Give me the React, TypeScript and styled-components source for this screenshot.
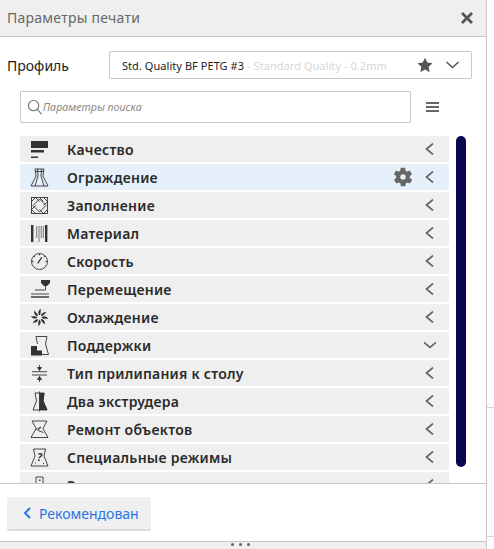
import React from "react";
import styled, { createGlobalStyle } from "styled-components";

const GlobalStyle = createGlobalStyle`
  html, body {
    margin: 0;
    padding: 0;
    background: #fff;
    font-family: "Noto Sans", "Open Sans", sans-serif;
  }
`;

const Page = styled.div`
  width: 494px;
  height: 549px;
  overflow: hidden;
  display: flex;
  background: #fff;
`;

const Panel = styled.div`
  width: 486px;
  height: 549px;
  flex: none;
  display: flex;
  flex-direction: column;
  border-right: 1px solid #c8c8c8;
`;

const Gutter = styled.div`
  flex: 1;
  padding-top: 407px;
`;

const GutterLine = styled.div`
  border-top: 1px solid #d4d4d4;
  height: 128px;
  border-bottom: 1px solid #d4d4d4;
  background: #fdfdfd;
`;

const Header = styled.div`
  height: 36px;
  flex: none;
  box-sizing: content-box;
  display: flex;
  align-items: center;
  justify-content: space-between;
  padding: 0 13px 0 7px;
  background: #efefef;
  border-bottom: 1px solid #c8c8c8;
  font-size: 14px;
  line-height: 34px;
  color: #666;
  letter-spacing: 0.25px;
`;

const ProfileRow = styled.div`
  display: flex;
  align-items: center;
  justify-content: space-between;
  padding: 14px 14px 0 7px;
`;

const ProfileLabel = styled.div`
  font-size: 14px;
  color: #222;
`;

const ProfileSelect = styled.div`
  width: 363px;
  height: 28px;
  box-sizing: border-box;
  display: flex;
  align-items: center;
  gap: 13px;
  padding: 0 12px;
  border: 1px solid #c8c8c8;
  border-radius: 2px;
  font-size: 11px;
  letter-spacing: 0.05px;
  white-space: nowrap;
`;

const ProfileText = styled.div`
  flex: 1;
`;

const ProfileName = styled.span`
  color: #222;
`;

const ProfileHint = styled.span`
  color: #d6d6d6;
  margin-left: 3px;
`;

const SearchRow = styled.div`
  display: flex;
  align-items: center;
  padding: 12px 0 0 20px;
`;

const SearchBox = styled.div`
  width: 391px;
  height: 32px;
  box-sizing: border-box;
  display: flex;
  align-items: center;
  gap: 1px;
  padding-left: 6px;
  border: 1px solid #c8c8c8;
  border-radius: 1px;
  font-size: 10.7px;
  font-style: italic;
  color: #888;
`;

const MenuButton = styled.div`
  margin-left: 15px;
  width: 13px;
  display: flex;
  flex-direction: column;
  gap: 2px;
`;

const MenuBar = styled.div`
  height: 2px;
  background: #666;
`;

const Body = styled.div`
  flex: 1;
  min-height: 0;
  overflow: hidden;
  display: flex;
  padding: 13px 0 0 20px;
`;

const List = styled.div`
  width: 429px;
  flex: none;
  display: flex;
  flex-direction: column;
  gap: 2px;
`;

const Row = styled.div<{ $active?: boolean }>`
  height: 26px;
  flex: none;
  display: flex;
  align-items: center;
  padding-left: 9px;
  background: ${(p) => (p.$active ? "#e5f0fb" : "#efefef")};
`;

const RowIcon = styled.svg`
  width: 20px;
  height: 20px;
  flex: none;
  overflow: visible;
  color: #333;
`;

const RowLabel = styled.div`
  margin-left: 18px;
  flex: 1;
  padding-top: 1px;
  font-size: 14px;
  font-weight: 600;
  color: #2a2a2a;
  letter-spacing: 0.25px;
`;

const RowGear = styled.svg`
  width: 22px;
  height: 22px;
  margin-right: 10px;
  color: #666;
`;

const RowChevron = styled.svg`
  width: 12px;
  height: 12px;
  margin-right: 13px;
  color: #666;
`;

const Scrollbar = styled.div`
  width: 10px;
  height: 331px;
  margin-left: 7px;
  flex: none;
  background: #0a0651;
  border-radius: 5px;
`;

const Footer = styled.div`
  height: 59px;
  flex: none;
  box-sizing: border-box;
  padding: 13px 0 0 7px;
  border-top: 1px solid #c8c8c8;
  border-bottom: 1px solid #c8c8c8;
`;

const BackButton = styled.div`
  width: 144px;
  height: 34px;
  box-sizing: border-box;
  display: flex;
  align-items: center;
  gap: 8px;
  padding-left: 16px;
  background: #efefef;
  border-radius: 2px;
  border-bottom: 2px solid #dcdcdc;
  font-size: 14px;
  color: #2a74e8;
`;

const Handle = styled.div`
  height: 6px;
  flex: none;
  display: flex;
  justify-content: center;
  gap: 5px;
  padding: 1px 6px 0 0;
  background: #efefef;
`;

const HandleDot = styled.div`
  width: 3px;
  height: 3px;
  border-radius: 50%;
  background: #666;
`;

const Chevron = ({ down }: { down?: boolean }) => (
  <RowChevron viewBox="0 0 12 12" fill="none" stroke="currentColor" strokeWidth="1.7">
    {down ? <path d="M0 3.5 6 8.5 12 3.5" /> : <path d="M9 .5 2.5 6 9 11.5" />}
  </RowChevron>
);

const hourglass = "M3 2H18L14 9.500 19 18.500H2L7 9.500Z";

const icons: Record<string, React.ReactNode> = {
  quality: (
    <g fill="currentColor">
      <rect x="2" y="2" width="17" height="7" />
      <rect x="2" y="11" width="13" height="2.500" />
      <rect x="2" y="17.500" width="7" height="1.500" />
    </g>
  ),
  shell: (
    <g fill="none" stroke="currentColor" strokeWidth=".9">
      <path d="M6 2H15L14 9 19 19H2L7 9Z" />
      <path d="M8.500 2 9 9 6 19M12.500 2 12 9 15 19M6 4.500H15" />
    </g>
  ),
  infill: (
    <g fill="none" stroke="currentColor" strokeWidth=".9">
      <rect x="2.500" y="2.500" width="16" height="16" />
      <path d="M10.500 4 17 10.500 10.500 17 4 10.500Z" />
      <path d="M2.500 6.500 6.500 2.500 10.500 6.500M14.500 2.500 18.500 6.500 14.500 10.500M18.500 14.500 14.500 18.500 10.500 14.500M6.500 18.500 2.500 14.500 6.500 10.500" />
      <path d="M6.500 2.500 2.500 6.500M10.500 2.500 14.500 6.500" />
    </g>
  ),
  material: (
    <g fill="none" stroke="currentColor">
      <path d="M3.200 2V19M17.200 2V19" strokeWidth="2.400" />
      <path d="M7.700 3V15M10 3V19M12.200 3V15M14.300 3V15" strokeWidth=".8" opacity=".8" />
    </g>
  ),
  speed: (
    <g fill="none" stroke="currentColor" strokeWidth=".9">
      <circle cx="10.500" cy="10.500" r="8" />
      <path d="M10.500 2.500V4.500M2.500 10.500H4.500M16.500 10.500H18.500M4.900 4.900 6.300 6.300M16.100 4.900 14.700 6.300" />
      <path d="M8.700 12.300 12.700 6.300" strokeWidth="1.300" />
    </g>
  ),
  travel: (
    <g>
      <path fill="currentColor" d="M12 1H21V4L18 7H15L12 4Z" />
      <g fill="none" stroke="currentColor" strokeWidth=".9">
        <path d="M16.500 7V11H6" />
        <path d="M2 15H20" />
        <path d="M2 18H20" strokeWidth="1.400" />
      </g>
    </g>
  ),
  cooling: (
    <g fill="currentColor">
      {[0, 45, 90, 135, 180, 225, 270, 315].map((a) => (
        <path
          key={a}
          d="M10.500 8.500C8.800 6.800 8.800 4 11.800 1.800 11.400 4.500 12.300 6.500 10.500 8.500Z"
          transform={`rotate(${a} 10.500 10.500)`}
        />
      ))}
    </g>
  ),
  support: (
    <g>
      <path fill="none" stroke="currentColor" strokeWidth=".9" d="M7 1.500H18L16.500 9 19.500 19.500H13M7 1.500 8.500 9" />
      <path fill="currentColor" d="M2 20.500V11H8V15.500H13V20.500Z" />
    </g>
  ),
  adhesion: (
    <g fill="none" stroke="currentColor" strokeWidth=".9">
      <path d="M3 8.700H18M3 12H18" />
      <path d="M10.500 2V7M10.500 14V19" />
      <path fill="currentColor" d="M8.500 4.500H12.500L10.500 7.500ZM8.500 16.500H12.500L10.500 13.500Z" />
    </g>
  ),
  dual: (
    <g>
      <path fill="none" stroke="currentColor" strokeWidth=".9" d="M6 2H15L14 10 18 19H4L7.500 10Z" />
      <path fill="currentColor" d="M10.500 2H15.500L14.500 10 18.500 19H10.500Z" />
      <path stroke="currentColor" strokeWidth=".9" d="M10.500 .5V20.500" />
    </g>
  ),
  repair: (
    <g fill="none" stroke="currentColor" strokeWidth=".9">
      <path d={hourglass} />
      <path d="M6 11 12 8 9 11.500 14.500 13.500" />
    </g>
  ),
  special: (
    <g>
      <path fill="none" stroke="currentColor" strokeWidth=".9" d="M4.500 2H16.500L15 9 19 19H2L6 9Z" />
      <text x="10.500" y="13.500" textAnchor="middle" fontSize="11" fontWeight="700" fontStyle="italic" fill="currentColor">
        ?
      </text>
      <path stroke="currentColor" strokeWidth="1.200" d="M6 16H7M14 16.500H15" />
    </g>
  ),
  experimental: (
    <g fill="none" stroke="currentColor" strokeWidth=".9">
      <path d="M7 2H14V9M7 2V9" />
      <rect x="10" y="4.500" width="1.500" height="1.500" fill="currentColor" stroke="none" />
      <path d="M14 9 18 19H3L7 9" />
    </g>
  ),
};

const rows = [
  { icon: "quality", label: "Качество" },
  { icon: "shell", label: "Ограждение", active: true },
  { icon: "infill", label: "Заполнение" },
  { icon: "material", label: "Материал" },
  { icon: "speed", label: "Скорость" },
  { icon: "travel", label: "Перемещение" },
  { icon: "cooling", label: "Охлаждение" },
  { icon: "support", label: "Поддержки", open: true },
  { icon: "adhesion", label: "Тип прилипания к столу" },
  { icon: "dual", label: "Два экструдера" },
  { icon: "repair", label: "Ремонт объектов" },
  { icon: "special", label: "Специальные режимы" },
  { icon: "experimental", label: "Экспериментальное" },
];

const App = () => (
  <Page>
    <GlobalStyle />
    <Panel>
      <Header>
        Параметры печати
        <svg width="12" height="12" viewBox="0 0 12 12" stroke="#555" strokeWidth="2.800">
          <path d="M1 1 11 11M11 1 1 11" />
        </svg>
      </Header>
      <ProfileRow>
        <ProfileLabel>Профиль</ProfileLabel>
        <ProfileSelect>
          <ProfileText>
            <ProfileName>Std. Quality BF PETG #3</ProfileName>
            <ProfileHint>- Standard Quality - 0.2mm</ProfileHint>
          </ProfileText>
          <svg width="16" height="16" viewBox="0 0 24 24" fill="#555">
            <path d="M12 1l3.400 7.300 7.900 1-5.800 5.500 1.500 7.900-7-3.900-7 3.900 1.500-7.900L.7 9.300l7.900-1z" />
          </svg>
          <svg width="13" height="8" viewBox="0 0 13 8" fill="none" stroke="#555" strokeWidth="1.500">
            <path d="M.5 1 6.500 6.500 12.500 1" />
          </svg>
        </ProfileSelect>
      </ProfileRow>
      <SearchRow>
        <SearchBox>
          <svg width="15" height="16" viewBox="0 0 16 17" fill="none" stroke="#777" strokeWidth="1.200">
            <circle cx="7" cy="7" r="5.500" />
            <path d="M11 11l4.500 5" />
          </svg>
          Параметры поиска
        </SearchBox>
        <MenuButton>
          <MenuBar />
          <MenuBar />
          <MenuBar />
        </MenuButton>
      </SearchRow>
      <Body>
        <List>
          {rows.map((r) => (
            <Row key={r.label} $active={r.active}>
              <RowIcon viewBox="0 0 20 20">{icons[r.icon]}</RowIcon>
              <RowLabel>{r.label}</RowLabel>
              {r.active && (
                <RowGear viewBox="0 0 24 24" fill="currentColor">
                  <path
                    fillRule="evenodd"
                    d="M19.400 13c.1-.3.1-.7.1-1s0-.7-.1-1l2.100-1.600c.2-.2.200-.4.100-.6l-2-3.500c-.1-.2-.4-.3-.6-.2l-2.500 1c-.5-.4-1.100-.7-1.700-1l-.4-2.600c0-.3-.2-.5-.5-.5h-4c-.3 0-.5.2-.5.400l-.4 2.700c-.6.200-1.200.6-1.700 1l-2.500-1c-.2-.1-.5 0-.6.200l-2 3.500c-.1.200-.1.400.1.600L4.600 11c-.1.300-.1.700-.1 1s0 .7.100 1l-2.100 1.600c-.2.200-.2.400-.1.600l2 3.500c.1.200.4.300.6.200l2.500-1c.5.400 1.100.7 1.700 1l.4 2.600c0 .3.200.5.500.5h4c.3 0 .5-.2.500-.4l.4-2.700c.6-.2 1.200-.6 1.700-1l2.500 1c.2.100.5 0 .6-.2l2-3.500c.1-.2.100-.4-.1-.6zM12 15a3 3 0 1 1 0-6 3 3 0 0 1 0 6z"
                  />
                </RowGear>
              )}
              <Chevron down={r.open} />
            </Row>
          ))}
        </List>
        <Scrollbar />
      </Body>
      <Footer>
        <BackButton>
          <svg width="8" height="12" viewBox="0 0 8 12" fill="none" stroke="#2a74e8" strokeWidth="2">
            <path d="M7 1 2 6 7 11" />
          </svg>
          Рекомендован
        </BackButton>
      </Footer>
      <Handle>
        <HandleDot />
        <HandleDot />
        <HandleDot />
      </Handle>
    </Panel>
    <Gutter>
      <GutterLine />
    </Gutter>
  </Page>
);

export default App;
